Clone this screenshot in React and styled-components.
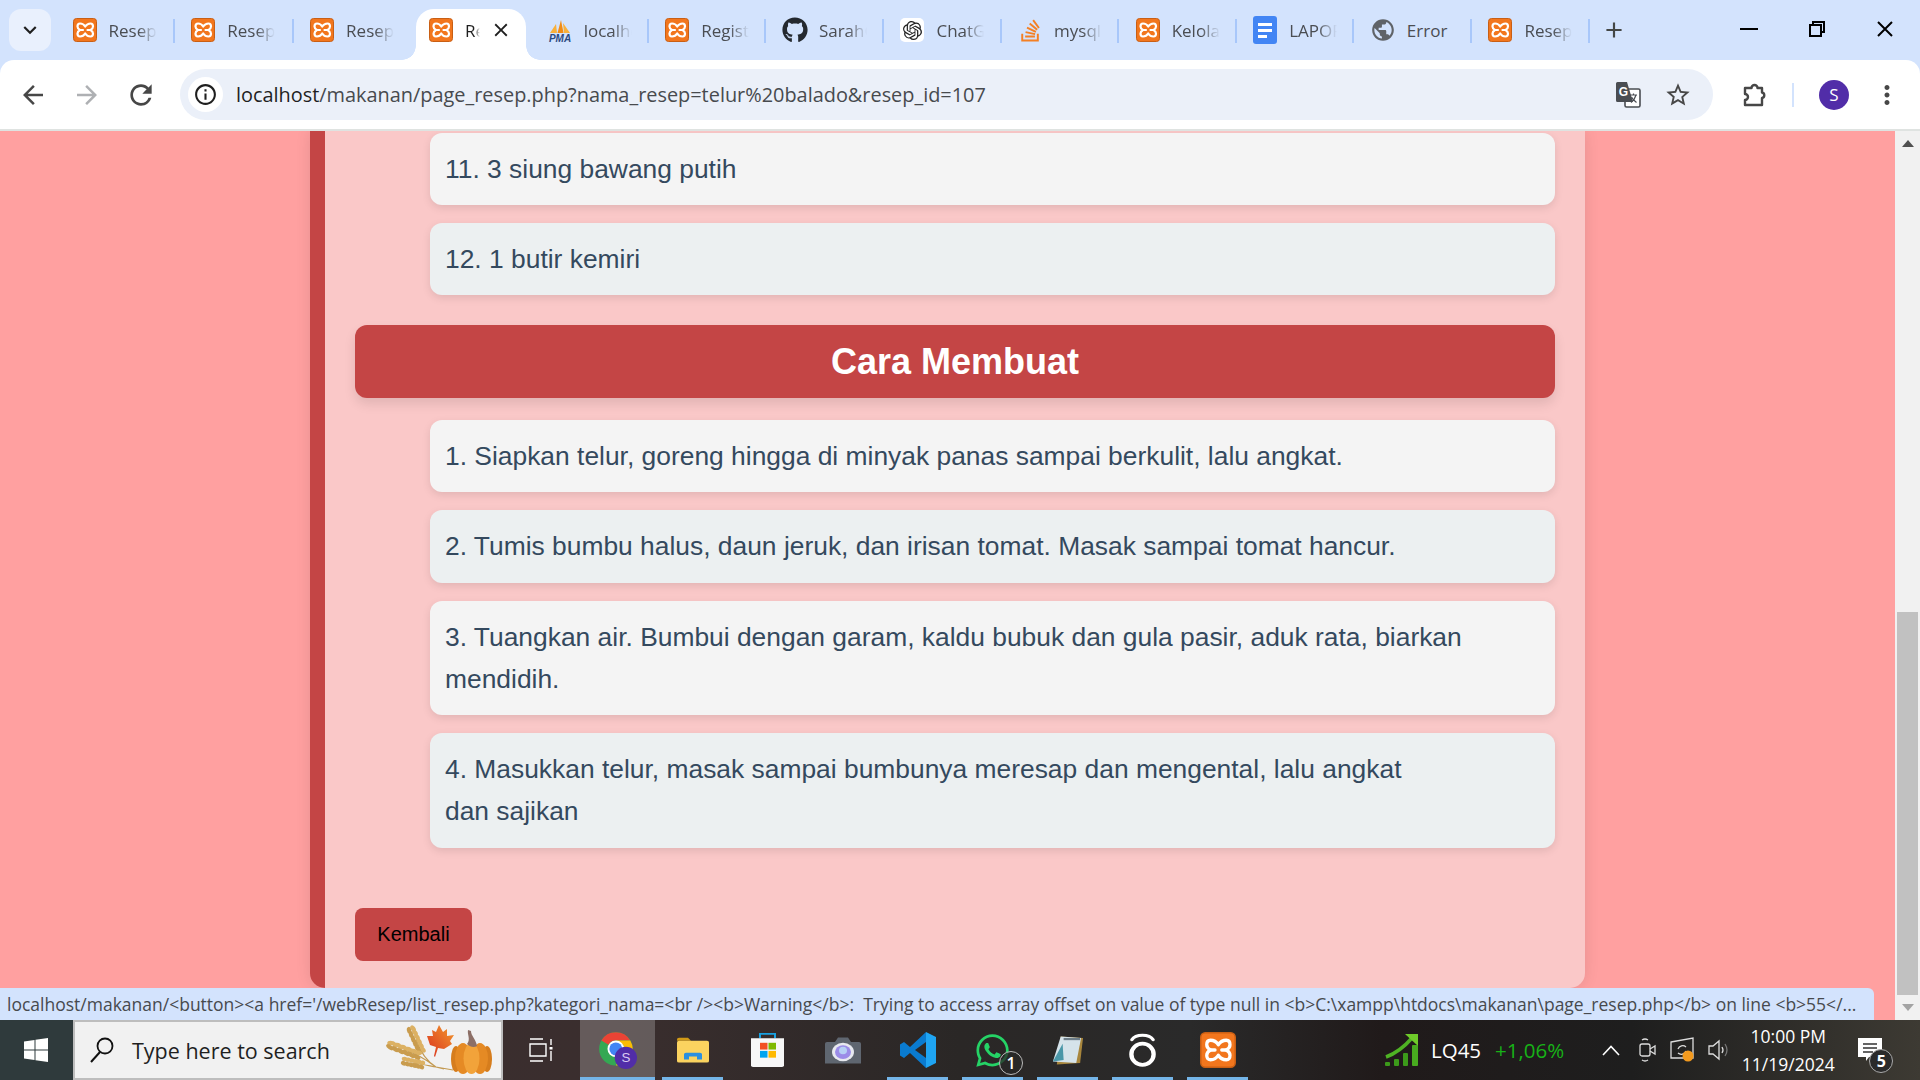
import React from 'react'
import styled, { createGlobalStyle } from 'styled-components'
import {
  MdArrowBack, MdArrowForward, MdRefresh, MdInfoOutline, MdClose, MdKeyboardArrowDown,
  MdAdd, MdMoreVert, MdStarBorder, MdPublic,
} from 'react-icons/md'
import { FaGithub, FaStackOverflow, FaWhatsapp } from 'react-icons/fa'
import { SiOpenai } from 'react-icons/si'

const GlobalStyle = createGlobalStyle`
  html, body { margin: 0; padding: 0; overflow: hidden; }
  body { font-family: "Liberation Sans", Arial, sans-serif; }
`

const UI = '"Open Sans", "Noto Sans", sans-serif'

const Screen = styled.div`
  width: 1920px;
  height: 1080px;
  display: flex;
  flex-direction: column;
  overflow: hidden;
  background: #d3e3fd;
`

const TabStrip = styled.div`
  height: 60px;
  flex: none;
  display: flex;
  align-items: center;
  background: #d3e3fd;
`

const TabSearch = styled.div`
  width: 42px;
  height: 42px;
  margin-left: 9px;
  margin-right: 5px;
  flex: none;
  display: flex;
  align-items: center;
  justify-content: center;
  border-radius: 12px;
  background: #e9f0fd;
  color: #1f1f1f;
`

const Tabs = styled.div`
  display: flex;
  height: 60px;
`

const Tab = styled.div`
  position: relative;
  flex: 0 0 117.6px;
  box-sizing: border-box;
  height: 60px;
  display: flex;
  align-items: center;
  padding-left: 15.5px;

  &:nth-child(-n + 3),
  &:nth-child(4) {
    flex-basis: 118.8px;
  }

  /* separator */
  &::after {
    content: '';
    display: ${(p) => (p.$noSep ? 'none' : 'block')};
    position: absolute;
    right: 0;
    top: 19px;
    width: 2px;
    height: 24px;
    background: #a8c7fa;
  }

  ${(p) => p.$active && `
    z-index: 1;
    &::before {
      content: '';
      position: absolute;
      left: 4px;
      right: 5px;
      top: 9px;
      bottom: 0;
      background: #fff;
      border-radius: 18px 18px 0 0;
    }
  `}
`

const Flare = styled.span`
  position: absolute;
  bottom: 0;
  width: 14px;
  height: 14px;
  ${(p) => (p.$right
    ? 'right: -9px; background: radial-gradient(circle at top right, transparent 13.5px, #fff 14px);'
    : 'left: -10px; background: radial-gradient(circle at top left, transparent 13.5px, #fff 14px);')}
`

const TabIcon = styled.div`
  position: relative;
  flex: none;
  width: 26px;
  height: 28px;
  margin-right: 11px;
  display: flex;
  align-items: center;
  justify-content: center;
`

const TabTitle = styled.div`
  position: relative;
  width: ${(p) => (p.$active ? '15px' : '48px')};
  overflow: hidden;
  white-space: nowrap;
  font-family: ${UI};
  font-size: 17px;
  color: ${(p) => (p.$active ? '#1f1f1f' : '#4a4d52')};
  ${(p) => !p.$plain && `
    -webkit-mask-image: linear-gradient(to right, #000 60%, transparent 100%);
    mask-image: linear-gradient(to right, #000 60%, transparent 100%);
  `}
`

const TabClose = styled.div`
  position: relative;
  margin-left: 10px;
  display: flex;
  color: #1f1f1f;
`

const GptBadge = styled.div`
  width: 24px;
  height: 24px;
  border-radius: 5px;
  background: #fff;
  display: flex;
  align-items: center;
  justify-content: center;
`

const NewTab = styled.div`
  width: 34px;
  margin-left: 7px;
  display: flex;
  justify-content: center;
  color: #444746;
`

const WinControls = styled.div`
  display: flex;
  margin-left: auto;
  margin-right: 1px;
  height: 60px;
`

const WinBtn = styled.div`
  width: 68px;
  display: flex;
  align-items: center;
  justify-content: center;
  padding-bottom: 2px;
`

const MinLine = styled.div`
  width: 18px;
  height: 2px;
  background: #000;
`

const Toolbar = styled.div`
  position: relative;
  height: 69px;
  flex: none;
  display: flex;
  align-items: center;
  padding-left: 6px;
  background: #fff;
  border-radius: 14px 14px 0 0;
  border-bottom: 2px solid #dfe3e1;
`

const NavBtn = styled.div`
  width: 54px;
  display: flex;
  justify-content: center;
  color: ${(p) => (p.$disabled ? '#aeb0b3' : '#474747')};
`

const Omnibox = styled.div`
  width: 1533px;
  height: 51px;
  margin-left: 12px;
  box-sizing: border-box;
  padding: 0 21px 0 8px;
  display: flex;
  align-items: center;
  border-radius: 26px;
  background: #ebf0f9;
`

const InfoChip = styled.div`
  width: 35px;
  height: 35px;
  flex: none;
  display: flex;
  align-items: center;
  justify-content: center;
  border-radius: 50%;
  background: #fff;
  color: #1f1f1f;
`

const Url = styled.div`
  margin-left: 13px;
  font-family: ${UI};
  font-size: 19.9px;
  color: #474a4e;
  white-space: nowrap;

  b {
    font-weight: 400;
    color: #1f1f1f;
  }
`

const OmniIcons = styled.div`
  margin-left: auto;
  display: flex;
  align-items: center;
  gap: 23px;
  color: #474747;
`

const Extension = styled.div`
  width: 30px;
  margin-left: 29px;
  display: flex;
  color: #474747;
`

const ToolSep = styled.div`
  width: 2px;
  height: 24px;
  margin-left: 20px;
  background: #d3e3fd;
`

const Avatar = styled.div`
  width: 30px;
  height: 30px;
  margin-left: 25px;
  display: flex;
  align-items: center;
  justify-content: center;
  border-radius: 50%;
  background: #512da8;
  color: #fff;
  font-family: ${UI};
  font-size: 17px;
`

const Kebab = styled.div`
  margin-left: 23px;
  display: flex;
  color: #474747;
`

const Viewport = styled.div`
  position: relative;
  flex: 1;
  min-height: 0;
  display: flex;
  background: #ffa0a0;
`

const PageScroll = styled.div`
  flex: 1;
  padding-left: 310px;
  overflow: hidden;
`

const Card = styled.div`
  width: 1275px;
  height: 857px;
  box-sizing: border-box;
  padding: 2px 30px 0;
  border-left: 15px solid #c44545;
  border-radius: 0 0 15px 15px;
  background: #fac8c8;
  box-shadow: 0 0 15px rgba(0, 0, 0, 0.1);
`

const List = styled.ul`
  list-style: none;
  margin: 0;
  padding: 0 0 0 75px;
`

const Item = styled.li`
  margin-bottom: 18px;
  padding: 15px;
  border-radius: 12px;
  background: #f4f4f4;
  color: #34495e;
  font-size: 26.4px;
  line-height: 42.24px;
  box-shadow: 0 3px 8px rgba(0, 0, 0, 0.1);

  &:nth-child(even) {
    background: #ecf0f1;
  }
`

const Heading = styled.h2`
  margin: 30px 0 21.7px;
  padding: 15px;
  border-radius: 12px;
  background: #c44545;
  color: #fff;
  font-size: 36px;
  line-height: 43px;
  font-weight: 700;
  text-align: center;
  box-shadow: 0 6px 12px rgba(0, 0, 0, 0.1);
`

const BackButton = styled.button`
  display: block;
  margin-top: 60px;
  width: 117px;
  height: 53px;
  padding: 0;
  border: none;
  border-radius: 8px;
  background: #c44545;
  color: #000;
  font-family: "Liberation Sans", Arial, sans-serif;
  font-size: 20px;
`

const Scrollbar = styled.div`
  width: 25px;
  flex: none;
  display: flex;
  flex-direction: column;
  align-items: center;
  background: #f1f1f1;
`

const ScrollArrow = styled.div`
  height: 25px;
  flex: none;
  display: flex;
  align-items: center;
  justify-content: center;
  margin-top: ${(p) => (p.$end ? 'auto' : '0')};
`

const UpTriangle = styled.div`
  border-left: 6px solid transparent;
  border-right: 6px solid transparent;
  border-bottom: 7px solid #505050;
`

const DownTriangle = styled.div`
  border-left: 6px solid transparent;
  border-right: 6px solid transparent;
  border-top: 7px solid #a3a3a3;
`

const ScrollThumb = styled.div`
  width: 21px;
  height: 384px;
  margin-top: 456px;
  background: #c1c1c1;
`

const StatusBubble = styled.div`
  position: absolute;
  left: 0;
  bottom: 0;
  width: 1874px;
  height: 32px;
  box-sizing: border-box;
  padding-left: 7px;
  display: flex;
  align-items: center;
  background: #d3e3fd;
  border-radius: 0 6px 0 0;
  color: #474a4e;
  font-family: ${UI};
  font-size: 17.5px;
  white-space: pre;
`

const Taskbar = styled.div`
  height: 60px;
  flex: none;
  display: flex;
  align-items: stretch;
  background: linear-gradient(90deg, #3b2d2e 0%, #3a2e2e 32%, #2a2726 50%, #2a2a2a 62%, #201a1a 72%, #1e1e1e 85%, #3d3a33 100%);
`

const StartBtn = styled.div`
  width: 73px;
  box-sizing: border-box;
  padding-right: 2px;
  flex: none;
  display: flex;
  align-items: center;
  justify-content: center;
  background: #2f3a3c;
`

const SearchBox = styled.div`
  width: 430px;
  flex: none;
  box-sizing: border-box;
  display: flex;
  align-items: center;
  padding: 0 7px 0 15px;
  border: 2px solid #bdbdbd;
  background: #f1f1f1;
`

const SearchText = styled.span`
  margin-left: 18px;
  font-family: ${UI};
  font-size: 21.5px;
  color: #1f1f1f;
`

const SearchArt = styled.div`
  margin-left: auto;
  display: flex;
`

const TaskView = styled.div`
  width: 77px;
  flex: none;
  display: flex;
  align-items: center;
  justify-content: center;
`

const DockSlot = styled.div`
  position: relative;
  width: 75px;
  flex: none;
  display: flex;
  align-items: center;
  justify-content: center;
  background: ${(p) => (p.$active ? 'rgba(255, 255, 255, 0.22)' : 'transparent')};

  &::after {
    content: '';
    display: ${(p) => (p.$on ? 'block' : 'none')};
    position: absolute;
    left: ${(p) => (p.$active ? '0' : '7px')};
    right: ${(p) => (p.$active ? '0' : '7px')};
    bottom: 0;
    height: 3px;
    background: #74b5e8;
  }
`

const Badge = styled.div`
  position: absolute;
  right: 7px;
  bottom: 5px;
  width: 24px;
  height: 24px;
  display: flex;
  align-items: center;
  justify-content: center;
  box-sizing: border-box;
  border: 1px solid #bbb;
  border-radius: 50%;
  background: rgba(40, 40, 40, 0.75);
  color: #fff;
  font-family: ${UI};
  font-size: 16px;
  font-weight: 600;
`

const Tray = styled.div`
  margin-left: 130px;
  flex: 1;
  display: flex;
  align-items: center;
`

const Ticker = styled.span`
  margin-left: 12px;
  font-family: ${UI};
  font-size: 20.5px;
  color: #fff;
`

const TickerUp = styled.span`
  margin-left: 14px;
  font-family: ${UI};
  font-size: 20.5px;
  color: #17b217;
`

const TrayIcon = styled.div`
  margin-left: ${(p) => p.$gap}px;
  display: flex;
`

const Clock = styled.div`
  width: 94px;
  margin-left: 10px;
  display: flex;
  flex-direction: column;
  align-items: center;
  gap: 4px;
  font-family: ${UI};
  font-size: 17.5px;
  line-height: 24px;
  color: #fff;
  white-space: nowrap;
`

const Notif = styled.div`
  position: relative;
  margin-left: 23px;
  display: flex;
`

const NotifCount = styled.div`
  position: absolute;
  left: 11px;
  top: 11px;
  width: 24px;
  height: 24px;
  box-sizing: border-box;
  display: flex;
  align-items: center;
  justify-content: center;
  border: 1px solid #aaa;
  border-radius: 50%;
  background: #2a2a2a;
  color: #fff;
  font-family: ${UI};
  font-size: 16px;
  font-weight: 700;
`

function Xampp({ size = 24 }) {
  return (
    <svg width={size} height={size} viewBox="0 0 24 24">
      <rect x="0.5" y="0.5" width="23" height="23" rx="3" fill="#f2761d" stroke="#c95f14" />
      <path d="M7 5.5 C9.5 5.5 11 6.5 12.2 8.5 C13.5 6.5 15 5.5 17.5 5.5 C19.5 5.5 20 7 20 8.5 C20 10 19 11.2 17.5 12 C19 12.8 20 14 20 15.5 C20 17 19.5 18.5 17.5 18.5 C15 18.5 13.5 17.5 12.2 15.5 C11 17.5 9.5 18.5 7 18.5 C5 18.5 4.5 17 4.5 15.5 C4.5 14 5.5 12.8 7 12 C5.5 11.2 4.5 10 4.5 8.5 C4.5 7 5 5.5 7 5.5 Z" fill="none" stroke="#fff" strokeWidth="2.2" strokeLinejoin="round" />
      <path d="M7 12 H10 M17.5 12 H14.5" stroke="#fff" strokeWidth="2.2" strokeLinecap="round" />
    </svg>
  )
}

function Pma() {
  return (
    <svg width="26" height="26" viewBox="0 0 26 26">
      <path d="M3 16 L9 7 L10 16 Z" fill="#f9b03a" />
      <path d="M10.5 16 L14 3 L16.5 16 Z" fill="#f28c13" />
      <path d="M17 16 L16 6 L23 16 Z" fill="#f9b03a" />
      <text x="13" y="25" textAnchor="middle" fontFamily="Liberation Sans" fontStyle="italic" fontWeight="700" fontSize="10" fill="#2b4a80">PMA</text>
    </svg>
  )
}

function Docs() {
  return (
    <svg width="24" height="28" viewBox="0 0 24 28">
      <rect width="24" height="28" rx="3" fill="#4285f4" />
      <rect x="5" y="7" width="14" height="3" fill="#fff" />
      <rect x="5" y="13" width="14" height="3" fill="#fff" />
      <rect x="5" y="19" width="9" height="3" fill="#fff" />
    </svg>
  )
}

function Translate() {
  return (
    <svg width="25" height="26" viewBox="0 0 25 26">
      <rect x="9" y="7" width="15" height="18" rx="1.5" fill="#fff" stroke="#4a4d52" strokeWidth="1.6" />
      <path d="M1.5 0 H11 L17 20 H1.5 a1.5 1.5 0 0 1 -1.5 -1.5 V1.5 a1.5 1.5 0 0 1 1.5 -1.5 z" fill="#4a4d52" />
      <text x="7.5" y="14" textAnchor="middle" fontFamily="Liberation Sans" fontWeight="700" fontSize="12" fill="#fff">G</text>
      <path d="M14 13 h7 M17.5 11.5 v1.5 M20 13 c-1 4 -3 6 -5 7.5 M15.5 15 c1 2.5 3 4 5 5.5" fill="none" stroke="#4a4d52" strokeWidth="1.2" />
    </svg>
  )
}

function Puzzle() {
  return (
    <svg width="26" height="26" viewBox="0 0 26 26" fill="none" stroke="#474747" strokeWidth="2.4" strokeLinejoin="round">
      <path d="M3 6 H9.5 a3 3 0 0 1 6 0 H20 V10.5 a2.8 2.8 0 0 1 0 5.5 V23 H3 V18 a3 3 0 0 0 0 -6 Z" />
    </svg>
  )
}

function Chrome() {
  return (
    <svg width="39" height="38" viewBox="0 0 35 34">
      <circle cx="16" cy="16" r="15" fill="#34a853" />
      <path d="M16 1 A15 15 0 0 1 29 8.5 L16 8.5 A7.5 7.5 0 0 0 9.5 12.2 L3 8.5 A15 15 0 0 1 16 1 Z" fill="#ea4335" />
      <path d="M29 8.5 A15 15 0 0 1 16 31 L22.5 19.8 A7.5 7.5 0 0 0 22.5 12.2 L16 8.5 Z" fill="#fbbc04" />
      <circle cx="16" cy="16" r="7.5" fill="#fff" />
      <circle cx="16" cy="16" r="5.8" fill="#4285f4" />
      <ellipse cx="25" cy="24" rx="10" ry="10" fill="#512da8" />
      <text x="25" y="28" textAnchor="middle" fontFamily="Liberation Sans" fontSize="12" fill="#d9c9f2">S</text>
    </svg>
  )
}

function Folder() {
  return (
    <svg width="33" height="27" viewBox="0 0 33 36" preserveAspectRatio="none">
      <path d="M1 3 a2 2 0 0 1 2 -2 h9 l3 4 H1 Z" fill="#d19a17" />
      <rect x="1" y="5" width="32" height="29" rx="2" fill="#fbd35f" />
      <path d="M8 30 v-7 a2 2 0 0 1 2 -2 h14 a2 2 0 0 1 2 2 v7 h-5 v-4 h-8 v4 Z" fill="#2a8fe0" />
    </svg>
  )
}

function Store() {
  return (
    <svg width="35" height="36" viewBox="0 0 35 40" preserveAspectRatio="none">
      <path d="M10 7 V2 H25 V7" fill="none" stroke="#18a0e0" strokeWidth="2" />
      <path d="M1 7 H34 V37 a2 2 0 0 1 -2 2 H3 a2 2 0 0 1 -2 -2 Z" fill="#f7f7f7" />
      <rect x="10" y="12" width="7.5" height="7.5" fill="#f25022" />
      <rect x="18.5" y="12" width="7.5" height="7.5" fill="#7fba00" />
      <rect x="10" y="21" width="7.5" height="7.5" fill="#00a4ef" />
      <rect x="18.5" y="21" width="7.5" height="7.5" fill="#ffb900" />
    </svg>
  )
}

function Camera() {
  return (
    <svg width="36" height="29" viewBox="0 0 36 38" preserveAspectRatio="none">
      <path d="M0 10 a2 2 0 0 1 2 -2 h8 l3 -6 h10 l3 6 h8 a2 2 0 0 1 2 2 v26 H0 Z" fill="#5f6670" />
      <ellipse cx="18" cy="21" rx="11" ry="12" fill="#e7e9ef" />
      <ellipse cx="18" cy="21" rx="8" ry="9" fill="#9b8ce8" />
      <ellipse cx="18" cy="19" rx="4" ry="5" fill="#b6d0f5" />
    </svg>
  )
}

function VsCode() {
  return (
    <svg width="36" height="36" viewBox="0 0 36 36">
      <path d="M26 0 L10 15 L4 10 L0 12.5 V23.5 L4 26 L10 21 L26 36 V26 L15 18 L26 10 Z" fill="#0a7bd0" />
      <path d="M26 0 L36 5 V31 L26 36 Z" fill="#1fa5f3" />
    </svg>
  )
}

function Notepad() {
  return (
    <svg width="33" height="31" viewBox="0 0 34 42" preserveAspectRatio="none">
      <path d="M10 2 L33 4 L30 38 L6 40 Z" fill="#a8863c" />
      <path d="M10 2 L31 4 L26 38 L2 36 Z" fill="#d5e3ea" />
      <path d="M2 36 L12 12 L13 34 Z" fill="#4a97a8" />
      <path d="M13 4 h17 v3 h-17 Z" fill="#6c7d88" />
    </svg>
  )
}

function ORing() {
  return (
    <svg width="29" height="34" viewBox="0 0 30 40" preserveAspectRatio="none">
      <path d="M4 8 C8 1 22 1 26 8" fill="none" stroke="#fff" strokeWidth="3.5" strokeLinecap="round" />
      <ellipse cx="15" cy="25" rx="11.5" ry="12.5" fill="none" stroke="#fff" strokeWidth="4.5" />
    </svg>
  )
}

function Graph() {
  return (
    <svg width="34" height="34" viewBox="0 0 34 34">
      <rect x="0" y="29" width="5" height="4" rx="1" fill="#3c9a1a" />
      <rect x="9" y="26" width="5" height="7" rx="1" fill="#3c9a1a" />
      <rect x="18" y="20" width="5" height="13" rx="1" fill="#3c9a1a" />
      <rect x="27" y="12" width="6" height="21" rx="1" fill="#48ab1f" />
      <path d="M1 24 C12 20 20 13 27 5" fill="none" stroke="#4fb324" strokeWidth="3.5" />
      <path d="M20 1 H33 V13 Z" fill="#6fcb2a" />
    </svg>
  )
}

// kernels along a wheat head, drawn along the x axis and then rotated into place
function WheatHead({ x, y, length, angle }) {
  const kernels = Array.from({ length: 6 }, (_, i) => (i + 0.5) * (length / 6) - length / 2)
  return (
    <g transform={`translate(${x} ${y}) rotate(${angle})`}>
      {kernels.map((k) => (
        <g key={k}>
          <ellipse cx={k} cy="-2.2" rx={length / 8} ry="2.2" fill="#dcb163" transform={`rotate(-14 ${k} -2.2)`} />
          <ellipse cx={k} cy="2.2" rx={length / 8} ry="2.2" fill="#c99c4e" transform={`rotate(14 ${k} 2.2)`} />
        </g>
      ))}
    </g>
  )
}

function SearchDecor() {
  return (
    <svg width="108" height="50" viewBox="0 0 108 50">
      <defs>
        <linearGradient id="leaf" x1="0" y1="1" x2="1" y2="0">
          <stop offset="0" stopColor="#d9301f" />
          <stop offset="1" stopColor="#f39a2c" />
        </linearGradient>
      </defs>
      <path d="M30 14 C34 26 40 36 50 42 M18 25 C30 28 42 36 50 42 M26 38 C36 39 44 41 50 42 L67 45 M50 42 L58 44" fill="none" stroke="#c39a52" strokeWidth="1.2" />
      <WheatHead x={30} y={15} length={28} angle={65} />
      <WheatHead x={18} y={25} length={34} angle={20} />
      <WheatHead x={27} y={38} length={22} angle={12} />
      <path d="M53 0 L57 7 L61 4 L61 11 L68 10 L64 16 L66 19 L58 24 L52 23 L49 32 L48 31 L50 22 L44 20 L41 11 L47 11 L46 5 L50 7 Z" fill="url(#leaf)" />
      <ellipse cx="70" cy="34" rx="5" ry="13" fill="#d67d1d" />
      <ellipse cx="101" cy="34" rx="5" ry="13" fill="#d67d1d" />
      <ellipse cx="77" cy="33.5" rx="8" ry="15.5" fill="#e58a24" />
      <ellipse cx="94" cy="33.5" rx="8" ry="15.5" fill="#e58a24" />
      <ellipse cx="85.5" cy="33.5" rx="8" ry="15.5" fill="#f2a33a" />
      <path d="M81 19 C85 14 81 10 82 5 L85 6 C85 11 90 14 91 21 C88 23 84 22 81 19 Z" fill="#8c6f66" />
    </svg>
  )
}

const tabs = [
  { icon: <Xampp />, title: 'Resep' },
  { icon: <Xampp />, title: 'Resep' },
  { icon: <Xampp />, title: 'Resep', noSep: true },
  { icon: <Xampp />, title: 'Resep', active: true, noSep: true },
  { icon: <Pma />, title: 'localhost' },
  { icon: <Xampp />, title: 'Registrasi' },
  { icon: <FaGithub size={26} color="#24292f" />, title: 'SarahGit' },
  { icon: <GptBadge><SiOpenai size={19} color="#222" /></GptBadge>, title: 'ChatGPT' },
  { icon: <FaStackOverflow size={25} color="#f48024" />, title: 'mysql' },
  { icon: <Xampp />, title: 'Kelola' },
  { icon: <Docs />, title: 'LAPORAN' },
  { icon: <MdPublic size={28} color="#5f6368" />, title: 'Error', plain: true },
  { icon: <Xampp />, title: 'Resep' },
]

const ingredients = ['11. 3 siung bawang putih', '12. 1 butir kemiri']

const steps = [
  '1. Siapkan telur, goreng hingga di minyak panas sampai berkulit, lalu angkat.',
  '2. Tumis bumbu halus, daun jeruk, dan irisan tomat. Masak sampai tomat hancur.',
  '3. Tuangkan air. Bumbui dengan garam, kaldu bubuk dan gula pasir, aduk rata, biarkan mendidih.',
  <>4. Masukkan telur, masak sampai bumbunya meresap dan mengental, lalu angkat<br />dan sajikan</>,
]

const dock = [
  { icon: <Chrome />, active: true, on: true },
  { icon: <Folder />, on: true },
  { icon: <Store /> },
  { icon: <Camera /> },
  { icon: <VsCode />, on: true },
  { icon: <><FaWhatsapp size={37} color="#25d366" /><Badge>1</Badge></>, on: true },
  { icon: <Notepad />, on: true },
  { icon: <ORing />, on: true },
  { icon: <Xampp size={36} />, on: true },
]

export default function App() {
  return (
    <Screen>
      <GlobalStyle />
      <TabStrip>
        <TabSearch><MdKeyboardArrowDown size={26} /></TabSearch>
        <Tabs>
          {tabs.map((t, i) => (
            <Tab key={i} $active={t.active} $noSep={t.noSep}>
              {t.active && <Flare />}
              {t.active && <Flare $right />}
              <TabIcon>{t.icon}</TabIcon>
              <TabTitle $active={t.active} $plain={t.plain}>{t.title}</TabTitle>
              {t.active && <TabClose><MdClose size={22} /></TabClose>}
            </Tab>
          ))}
        </Tabs>
        <NewTab><MdAdd size={26} /></NewTab>
        <WinControls>
          <WinBtn><MinLine /></WinBtn>
          <WinBtn><svg width="16" height="16" viewBox="0 0 16 16"><path d="M4 3.5 V1 H15 V11 H12.5 M1 4 H12 V15 H1 Z" fill="none" stroke="#000" strokeWidth="2" /></svg></WinBtn>
          <WinBtn><svg width="18" height="18" viewBox="0 0 18 18"><path d="M2 2 L16 16 M16 2 L2 16" stroke="#000" strokeWidth="2" /></svg></WinBtn>
        </WinControls>
      </TabStrip>

      <Toolbar>
        <NavBtn><MdArrowBack size={30} /></NavBtn>
        <NavBtn $disabled><MdArrowForward size={30} /></NavBtn>
        <NavBtn><MdRefresh size={32} /></NavBtn>
        <Omnibox>
          <InfoChip><MdInfoOutline size={25} /></InfoChip>
          <Url><b>localhost</b>/makanan/page_resep.php?nama_resep=telur%20balado&amp;resep_id=107</Url>
          <OmniIcons>
            <Translate />
            <MdStarBorder size={28} />
          </OmniIcons>
        </Omnibox>
        <Extension><Puzzle /></Extension>
        <ToolSep />
        <Avatar>S</Avatar>
        <Kebab><MdMoreVert size={30} /></Kebab>
      </Toolbar>

      <Viewport>
        <PageScroll>
          <Card>
            <List>
              {ingredients.map((x) => <Item key={x}>{x}</Item>)}
            </List>
            <Heading>Cara Membuat</Heading>
            <List>
              {steps.map((x, i) => <Item key={i}>{x}</Item>)}
            </List>
            <BackButton>Kembali</BackButton>
          </Card>
        </PageScroll>
        <Scrollbar>
          <ScrollArrow><UpTriangle /></ScrollArrow>
          <ScrollThumb />
          <ScrollArrow $end><DownTriangle /></ScrollArrow>
        </Scrollbar>
        <StatusBubble>
          localhost/makanan/&lt;button&gt;&lt;a href='/webResep/list_resep.php?kategori_nama=&lt;br /&gt;&lt;b&gt;Warning&lt;/b&gt;:&nbsp; Trying to access array offset on value of type null in &lt;b&gt;C:\xampp\htdocs\makanan\page_resep.php&lt;/b&gt; on line &lt;b&gt;55&lt;/...
        </StatusBubble>
      </Viewport>

      <Taskbar>
        <StartBtn>
          <svg width="24" height="24" viewBox="0 0 24 24" fill="#fff">
            <path d="M0 3.5 L10.5 2 V11.5 H0 Z M11.5 1.8 L24 0 V11.5 H11.5 Z M0 12.5 H10.5 V22 L0 20.5 Z M11.5 12.5 H24 V24 L11.5 22.2 Z" />
          </svg>
        </StartBtn>
        <SearchBox>
          <svg width="24" height="26" viewBox="0 0 24 26">
            <circle cx="15" cy="9" r="7.5" fill="none" stroke="#111" strokeWidth="1.8" />
            <path d="M10 15 L1 25" stroke="#111" strokeWidth="2" />
          </svg>
          <SearchText>Type here to search</SearchText>
          <SearchArt><SearchDecor /></SearchArt>
        </SearchBox>
        <TaskView>
          <svg width="26" height="24" viewBox="0 0 26 24" fill="none" stroke="#fff" strokeWidth="1.4">
            <path d="M1 1 H14 M1 23 H14 M1 6 H17 V18 H1 Z M22 1 V7 M22 13 V23" />
            <rect x="20.5" y="9" width="3" height="2.5" fill="#fff" stroke="none" />
          </svg>
        </TaskView>
        {dock.map((d, i) => (
          <DockSlot key={i} $active={d.active} $on={d.on}>{d.icon}</DockSlot>
        ))}
        <Tray>
          <Graph />
          <Ticker>LQ45</Ticker>
          <TickerUp>+1,06%</TickerUp>
          <TrayIcon $gap={38}>
            <svg width="18" height="11" viewBox="0 0 18 11"><path d="M1 10 L9 1.5 L17 10" fill="none" stroke="#fff" strokeWidth="1.6" /></svg>
          </TrayIcon>
          <TrayIcon $gap={19}>
            <svg width="17" height="24" viewBox="0 0 17 24" fill="none" stroke="#ddd" strokeWidth="1.3">
              <path d="M3 2 Q6 0 9 2 M3 22 Q6 24 9 22" />
              <rect x="1" y="6" width="10" height="12" rx="2" />
              <path d="M11 11 L16 8 V16 L11 13" />
            </svg>
          </TrayIcon>
          <TrayIcon $gap={14}>
            <svg width="25" height="26" viewBox="0 0 25 26">
              <path d="M1 5 L23 1 V21 H1 Z" fill="none" stroke="#ddd" strokeWidth="1.3" />
              <path d="M8 12 a5 5 0 0 1 8 -2 M16 14 a5 5 0 0 1 -8 2" fill="none" stroke="#ddd" strokeWidth="1.3" />
              <circle cx="18" cy="19" r="5.5" fill="#f39a1e" />
            </svg>
          </TrayIcon>
          <TrayIcon $gap={13}>
            <svg width="23" height="24" viewBox="0 0 23 24" fill="none" stroke="#ddd" strokeWidth="1.3">
              <path d="M1 8 H5 L11 3 V21 L5 16 H1 Z" />
              <path d="M14 9 Q16 12 14 15" />
              <path d="M17 6 Q21 12 17 18" stroke="#777" />
            </svg>
          </TrayIcon>
          <Clock>
            <span>10:00 PM</span>
            <span>11/19/2024</span>
          </Clock>
          <Notif>
            <svg width="24" height="24" viewBox="0 0 24 24">
              <path d="M0 0 H24 V19 H11 L8 23 V19 H0 Z" fill="#fff" />
              <path d="M5 6 H19 M5 10 H19 M5 14 H15" stroke="#333" strokeWidth="1.4" />
            </svg>
            <NotifCount>5</NotifCount>
          </Notif>
        </Tray>
      </Taskbar>
    </Screen>
  )
}
